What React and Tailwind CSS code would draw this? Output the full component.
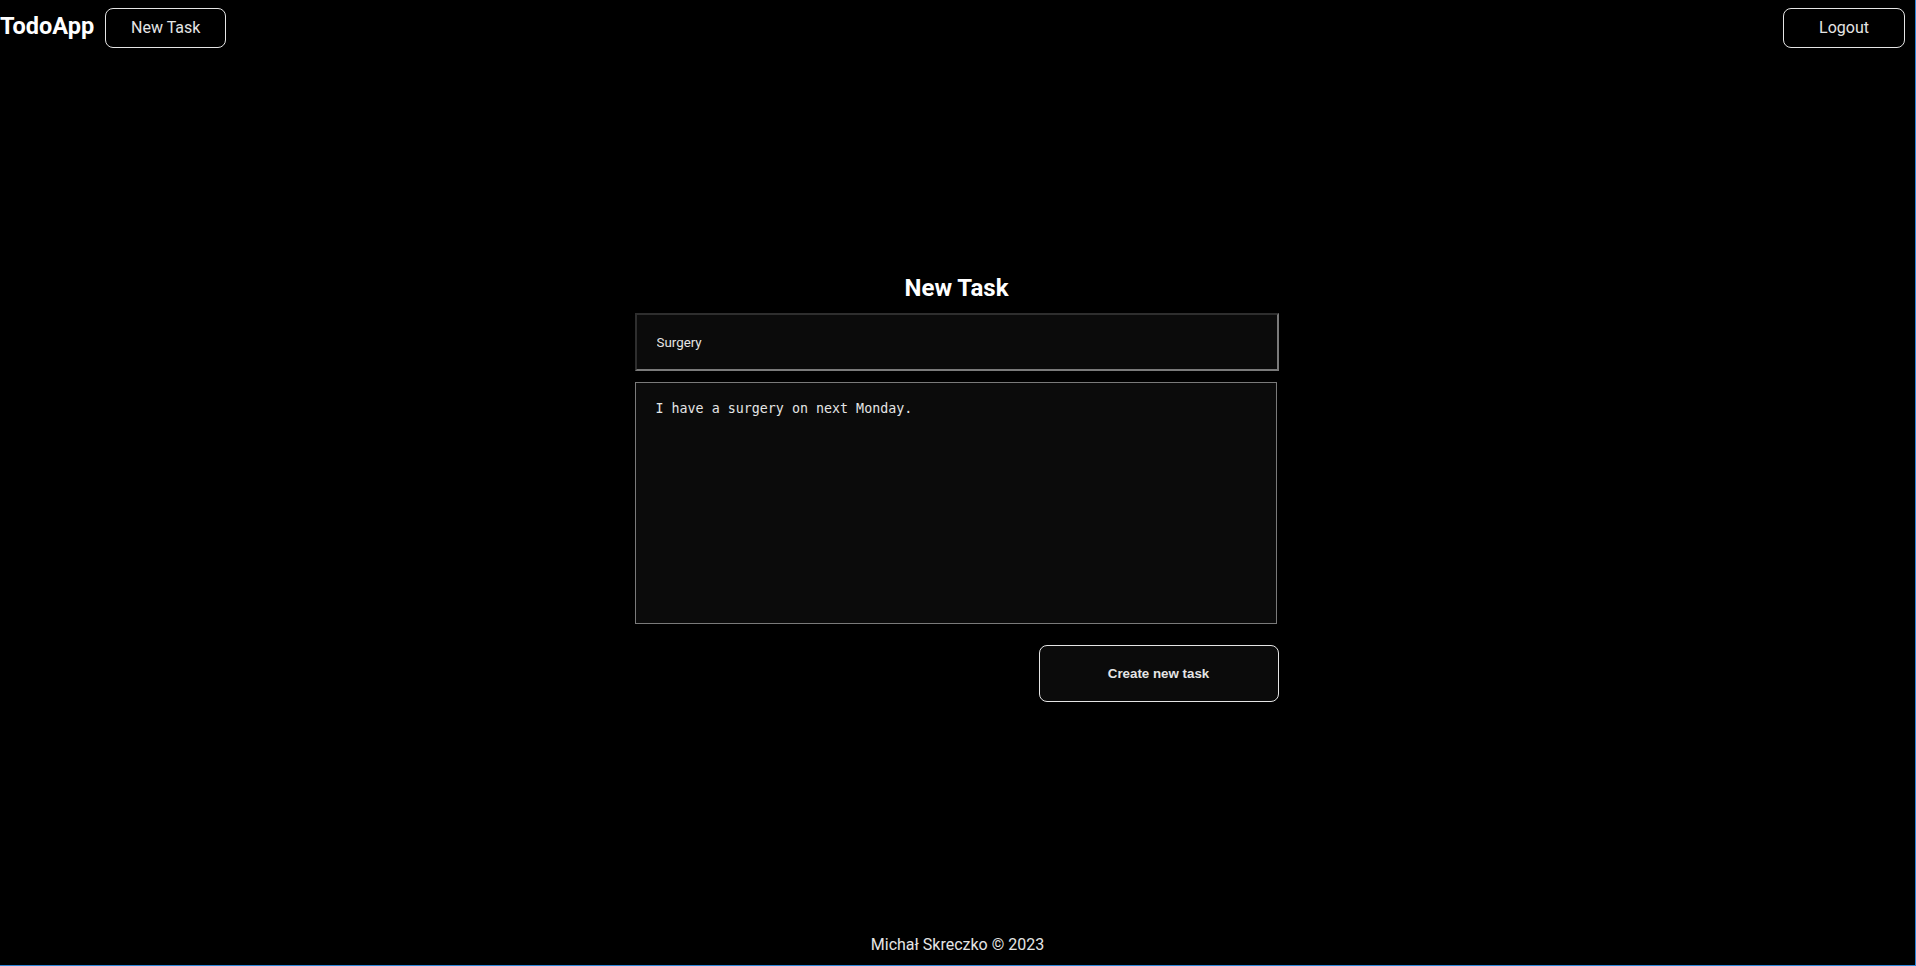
import { useState } from "react";

export default function App() {
  const [title, setTitle] = useState("Surgery");
  const [body, setBody] = useState("I have a surgery on next Monday.");

  return (
    <div className="min-h-screen flex flex-col bg-black text-white border-r border-b border-[#2f86d8] font-['Roboto',sans-serif]">
      {/* Header */}
      <header className="flex items-start justify-between pt-2 pr-[10px] h-14">
        <div className="flex items-center gap-[11px]">
          <span className="text-[23.5px] font-bold leading-none -mt-[3px]">TodoApp</span>
          <button className="w-[121px] h-10 rounded-lg border border-[#e5e5e5] text-[16px] text-[#e5e5e5]">
            New Task
          </button>
        </div>
        <button className="w-[122px] h-10 rounded-lg border border-[#e5e5e5] text-[16px] text-[#e5e5e5]">
          Logout
        </button>
      </header>

      {/* Form */}
      <main className="flex-1 flex items-center justify-center">
        <div className="w-[644px] flex flex-col -mt-[7px] -ml-[2px]">
          <h1 className="text-[24px] font-bold text-center leading-8 mb-[9px]">New Task</h1>
          <input
            value={title}
            onChange={(e) => setTitle(e.target.value)}
            className="h-[58px] w-[644px] bg-[#0b0b0b] border-2 border-t-[#2e2e2e] border-l-[#2e2e2e] border-b-[#7a7a7a] border-r-[#7a7a7a] pl-5 pr-4 pt-[1px] text-[13.333px] text-[#e5e5e5] font-['Roboto',sans-serif] outline-none"
          />
          <textarea
            value={body}
            onChange={(e) => setBody(e.target.value)}
            className="mt-[11px] h-[242px] w-[642px] bg-[#0b0b0b] border border-[#7a7a7a] px-5 py-[18px] text-[13.333px] leading-4 text-[#e5e5e5] font-['DejaVu_Sans_Mono',monospace] resize-none outline-none"
          />
          <div className="flex justify-end mt-[21px]">
            <button className="w-[240px] h-[57px] rounded-lg border border-[#e5e5e5] bg-[#0b0b0b] text-[13.333px] font-bold text-[#e5e5e5] font-['Liberation_Sans',Arial,sans-serif]">
              Create new task
            </button>
          </div>
        </div>
      </main>

      {/* Footer */}
      <footer className="h-10 flex items-center justify-center text-[16px] text-[#e5e5e5]">
        Michał Skreczko © 2023
      </footer>
    </div>
  );
}
